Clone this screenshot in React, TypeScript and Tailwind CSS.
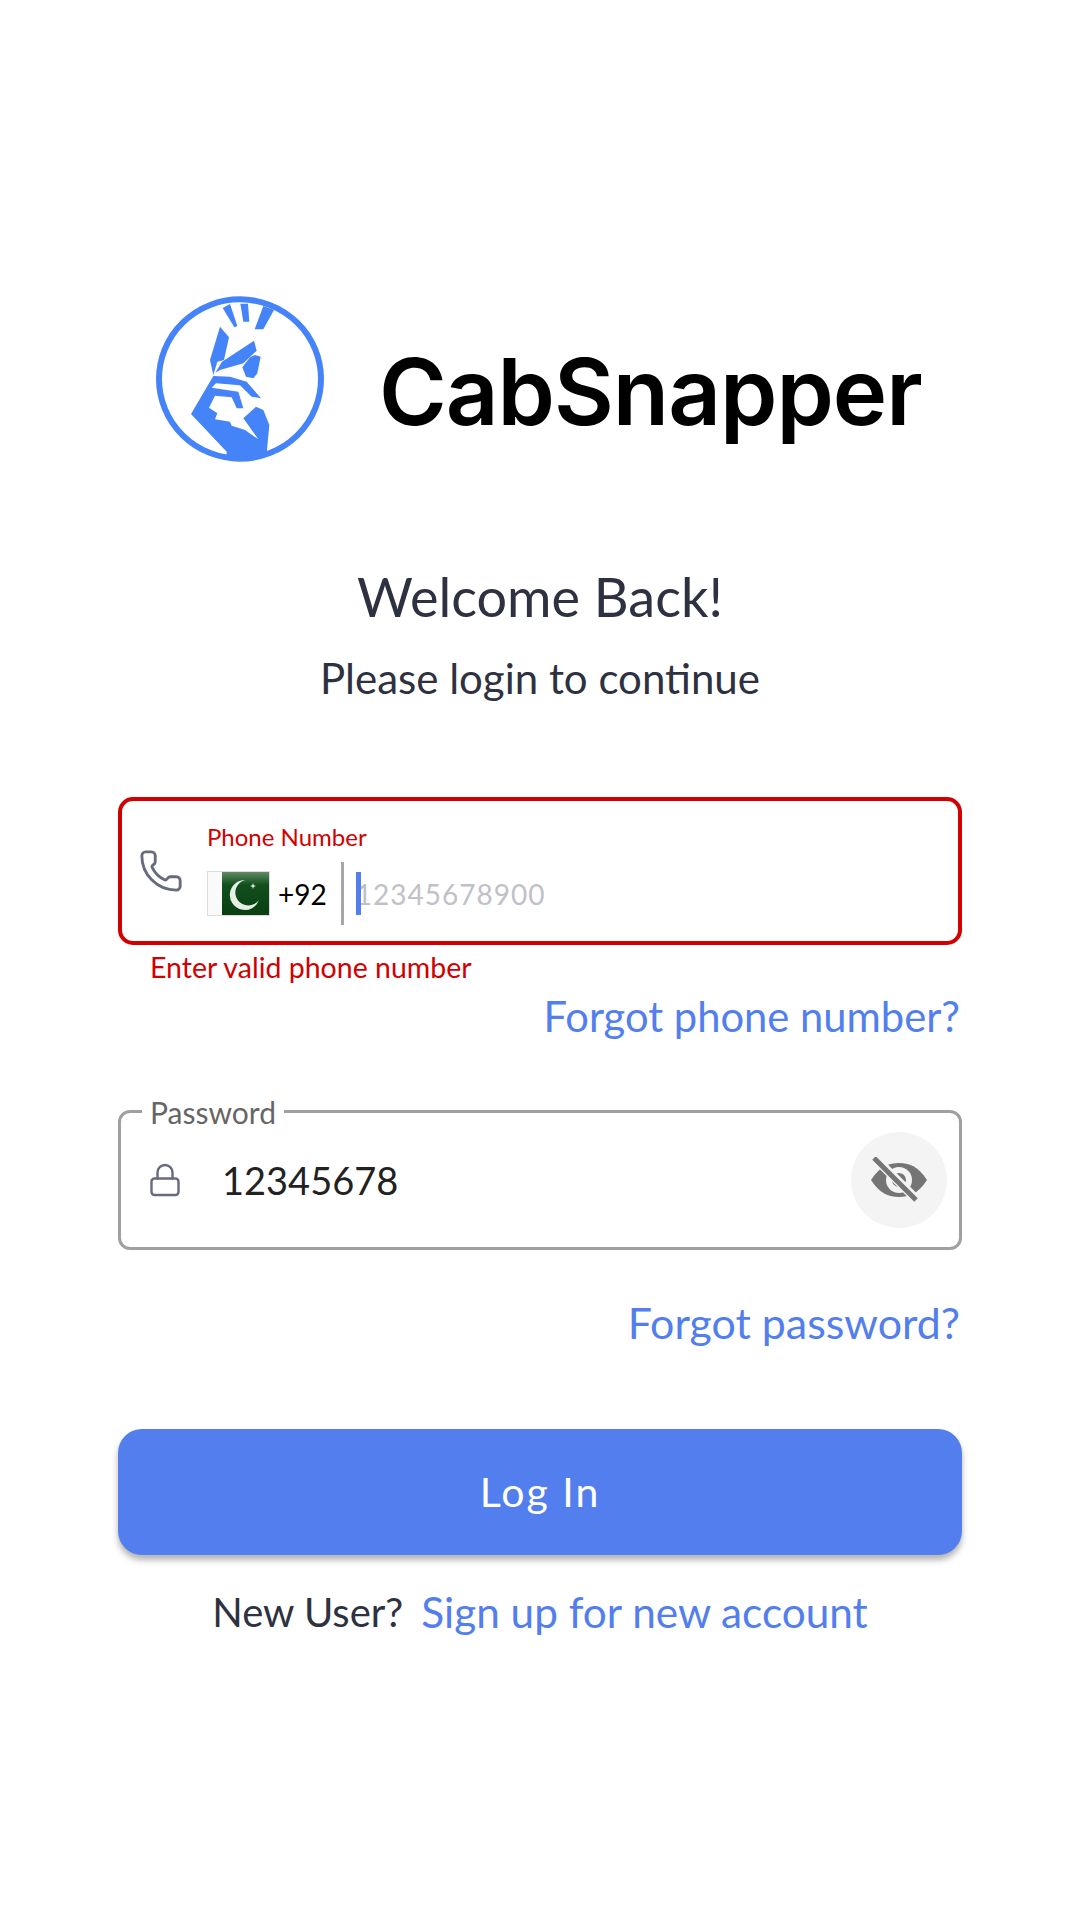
import { Phone, Lock } from "lucide-react";

function Logo() {
  return (
    <svg width="220" height="190" viewBox="0 0 660 570" className="ml-[12px] shrink-0">
      <ellipse cx="330" cy="297" rx="243" ry="239" fill="none" stroke="#4484f8" strokeWidth="18" />
      <g fill="#4484f8">
        <polygon points="278,84 300,72 322,138 313,142" />
        <polygon points="331,71 354,71 358,125 340,125" />
        <polygon points="400,78 432,90 400,148 374,148" />
        <polygon points="270,140 297,172 282,240 262,245 250,285 240,240" />
        <polygon points="372,182 380,212 340,250 270,270 256,278 276,245" />
        <polygon points="360,232 375,225 392,230 382,280 370,295 348,290 337,262" />
        <path d="M250 288 L300 290 L350 305 L393 355 L365 350 L330 316 L258 310 L245 323 L325 335 L340 385 L320 385 L305 352 L255 347 L237 383 L262 400 L255 418 L300 425 L305 437 L345 450 L385 478 L340 415 L378 380 L400 390 L418 435 L410 520 A243 239 0 0 1 290 530 L290 515 L183 402 Z" />
      </g>
    </svg>
  );
}

function Flag() {
  return (
    <svg width="63" height="45" viewBox="0 0 63 45" className="shrink-0">
      <defs>
        <linearGradient id="flag-green" x1="0" y1="0" x2="0" y2="1">
          <stop offset="0" stopColor="#5f8a64" />
          <stop offset="0.3" stopColor="#11501d" />
          <stop offset="1" stopColor="#0a3f12" />
        </linearGradient>
      </defs>
      <rect x="0" y="0" width="16" height="45" fill="#fafafa" />
      <rect x="0.5" y="0.5" width="62" height="44" fill="none" stroke="#dcdcdc" />
      <rect x="15" y="1" width="47" height="43" fill="url(#flag-green)" />
      <path d="M38 9 A15 15 0 1 0 52 29 A13 13 0 1 1 38 9 Z" fill="#e6efe4" />
      <polygon points="46,12 46.8,14.3 49,15 46.8,15.7 46,18 45.2,15.7 43,15 45.2,14.3" fill="#e6efe4" />
    </svg>
  );
}

function EyeOff() {
  return (
    <svg width="58" height="46" viewBox="0 0 58 46">
      <path d="M1 23 C10 9 19 6 29 6 C39 6 48 9 57 23 C48 37 39 40 29 40 C19 40 10 37 1 23 Z" fill="#757575" />
      <circle cx="29" cy="23" r="13" fill="#f4f4f4" />
      <circle cx="29" cy="23" r="7" fill="#757575" />
      <line x1="6" y1="2" x2="48" y2="44" stroke="#f4f4f4" strokeWidth="9" />
      <line x1="4" y1="1" x2="46" y2="43" stroke="#757575" strokeWidth="5" />
    </svg>
  );
}

export default function App() {
  return (
    <div className="w-[1080px] h-[1920px] bg-white px-[118px] pt-[280px] font-['Lato',sans-serif] text-[#2e3140]">
      <div className="flex items-center h-[190px]">
        <Logo />
        <span className="ml-[29px] mt-[34px] text-[92px] font-semibold leading-none tracking-[-1px] text-black font-['Inter',sans-serif]">CabSnapper</span>
      </div>

      <div className="mt-[96px] h-[60px] flex items-center justify-center text-[54px]">Welcome Back!</div>
      <div className="mt-[28px] h-[48px] flex items-center justify-center text-[42px]">Please login to continue</div>

      <div className="mt-[95px] h-[148px] flex items-start border-[4px] border-[#d20000] rounded-[15px] pl-[16px]">
        <Phone size={46} strokeWidth={1.5} className="mt-[47px] text-[#666c7c] shrink-0" />
        <div className="ml-[23px] mt-[23px] flex flex-col">
          <div className="h-[26px] flex items-center text-[24px] text-[#d20000]">Phone Number</div>
          <div className="mt-[12px] h-[63px] flex items-center">
            <Flag />
            <span className="ml-[8px] text-[28px] text-black">+92</span>
            <div className="ml-[14px] h-[63px] w-[3px] bg-[#a6a6a6]" />
            <div className="relative ml-[12px] text-[28px] tracking-[1px] text-[#c0c1c7]">
              12345678900
              <div className="absolute left-0 top-[-1px] h-[43px] w-[5px] bg-[#527eee]" />
            </div>
          </div>
        </div>
      </div>

      <div className="mt-[6px] h-[32px] pl-[32px] flex items-center text-[28.5px] text-[#d20000]">Enter valid phone number</div>
      <div className="mt-[11px] h-[44px] pr-[2px] flex items-center justify-end text-[41.7px] text-[#527eee]">Forgot phone number?</div>

      <div className="relative mt-[72px] h-[140px] flex items-center border-[3px] border-[#a0a0a0] rounded-[12px] pl-[26px] pr-[12px]">
        <div className="absolute left-[21px] top-[-17px] h-[32px] px-[8px] bg-white flex items-center text-[30px] text-[#666666]">Password</div>
        <Lock size={36} strokeWidth={1.6} className="text-[#666c7c] shrink-0" />
        <div className="ml-[39px] text-[38px] text-[#222222] grow">12345678</div>
        <div className="w-[96px] h-[96px] rounded-full bg-[#f4f4f4] flex items-center justify-center shrink-0">
          <EyeOff />
        </div>
      </div>

      <div className="mt-[51px] h-[44px] pr-[2px] flex items-center justify-end text-[42.9px] text-[#527eee]">Forgot password?</div>

      <div className="mt-[84px] h-[126px] rounded-[24px] bg-[#527eee] shadow-[0_5px_6px_rgba(0,0,0,0.3)] flex items-center justify-center text-[41px] tracking-[2px] text-white">Log In</div>

      <div className="mt-[35px] h-[44px] flex items-center justify-center text-[40px]">
        <span>New User?</span>
        <span className="ml-[18px] text-[42.3px] text-[#527eee]">Sign up for new account</span>
      </div>
    </div>
  );
}
